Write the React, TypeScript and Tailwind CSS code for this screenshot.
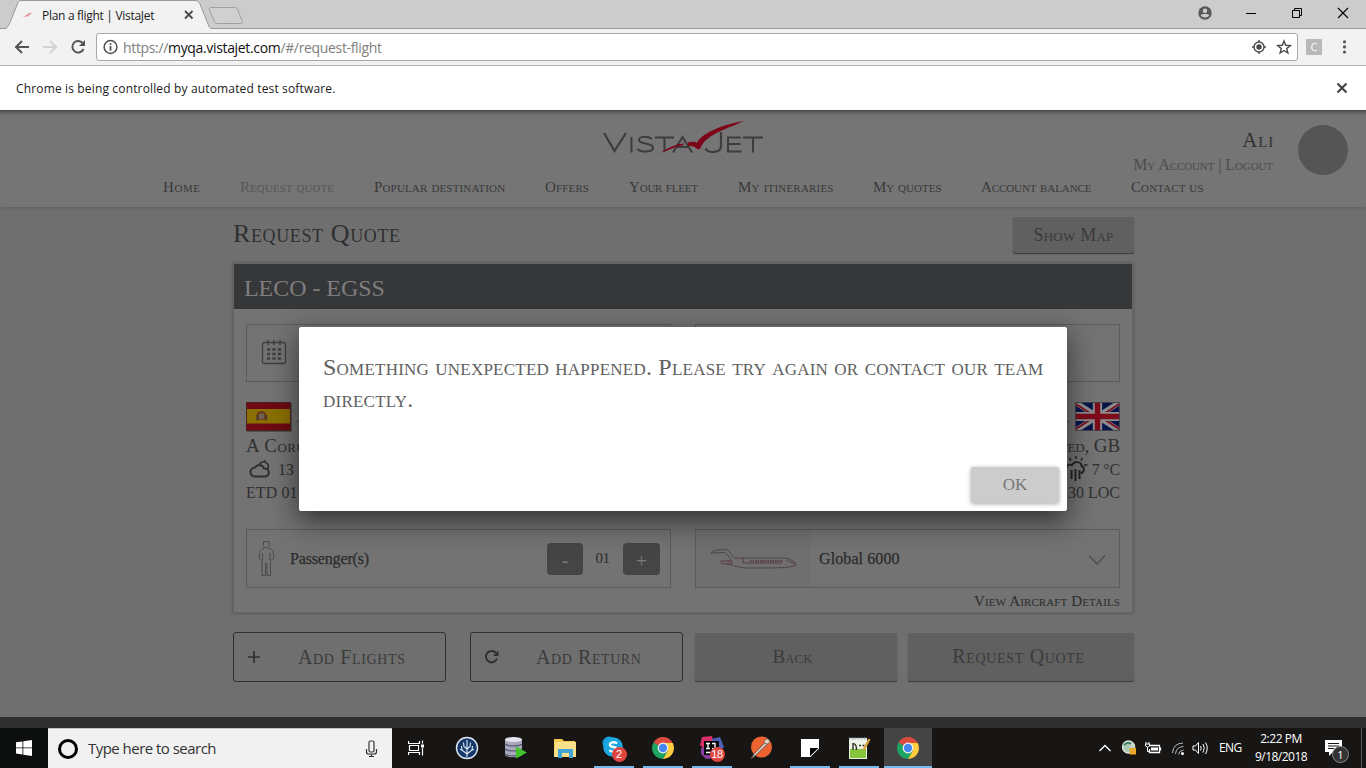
import type { ReactNode } from "react";

const serif = "font-['Liberation_Serif',serif] whitespace-nowrap";
const caps = "[font-variant-caps:small-caps]";
const sans = "font-['Open_Sans','Noto_Sans',sans-serif] whitespace-nowrap";

const navItems = [
  { label: "Home", style: "w-[37px] tracking-[0.57px] text-[#393939]" },
  { label: "Request quote", style: "w-[94px] tracking-[0.07px] text-[#565656]" },
  { label: "Popular destination", style: "w-[131px] tracking-[0.16px] text-[#393939]" },
  { label: "Offers", style: "w-[44px] tracking-[0.15px] text-[#393939]" },
  { label: "Your fleet", style: "w-[69px] tracking-[-0.2px] text-[#393939]" },
  { label: "My itineraries", style: "w-[95px] tracking-[0.2px] text-[#393939]" },
  { label: "My quotes", style: "w-[68px] tracking-[0.01px] text-[#393939]" },
  { label: "Account balance", style: "w-[110px] tracking-[-0.09px] text-[#393939]" },
  { label: "Contact us", style: "w-[72px] tracking-[0.11px] text-[#393939]" },
];

function TabStrip() {
  return (
    <div className="relative flex h-[29px] shrink-0 bg-[#cccccc]">
      <svg className="absolute inset-0 h-[29px] w-full" viewBox="0 0 1366 29">
        <path d="M0 28.5H1366" stroke="#999" />
        <path d="M6 29C9 26 9.500 24 11 20L17 5C18 2 18.500 .5 21 .5H195C198 .5 199 2 200 4L208 24C209 27 210 28 212 29Z" fill="#f2f2f2" />
        <path d="M0 28.500H5C7 28 9 25 11 20L17 5C18 2 18.500 .5 21 .5H195C198 .5 199 2 200 4L208 24C209 27 210 28.500 212 28.500" fill="none" stroke="#999" />
        <path d="M211 7.500H235C236 7.500 237 8 237.500 9.500L242 20.500C243 22.500 242.500 23.500 241 23.500H218C216 23.500 215 23 214.500 21.500L209.500 10C209 8.500 209.500 7.500 211 7.500Z" fill="#d0d0d0" stroke="#a0a0a0" />
        <path d="M22.500 17C26 15.500 27 15 28 13.500C29.500 13.500 31 12.500 33 12.500C30.500 14 29 15.500 27.500 16.500C26 16.500 25 16 22.500 17Z" fill="#e08a96" />
        <path d="M185 11L192.500 18.500M192.500 11L185 18.500" stroke="#4a4a4a" strokeWidth="1.800" />
      </svg>
      <span className={`${sans} relative ml-[42px] text-[12px] leading-[31px] tracking-[-0.3px] text-[#1c1c1c]`}>Plan a flight | VistaJet</span>
      <svg className="relative ml-auto h-[28px] w-[170px]" viewBox="1196 0 170 28" fill="none">
        <circle cx="1205" cy="13" r="6.700" fill="#585858" />
        <circle cx="1205" cy="10.700" r="2.200" fill="#ccc" />
        <path d="M1200.700 15.500C1202 13.600 1208 13.600 1209.300 15.500C1207.500 18 1202.500 18 1200.700 15.500Z" fill="#ccc" />
        <path d="M1246 13.500H1256" stroke="#000" />
        <path d="M1292.500 10.500H1299.500V17.500H1292.500ZM1294.500 10V8.500H1301.500V15.500H1300" stroke="#000" />
        <path d="M1338 8L1348 18M1348 8L1338 18" stroke="#000" strokeWidth="1.100" />
      </svg>
    </div>
  );
}

function Toolbar() {
  return (
    <div className="flex h-[37px] shrink-0 items-center border-b border-[#b0b0b0] bg-[#f2f2f2]">
      <svg className="h-[36px] w-[96px]" viewBox="0 29 96 36" fill="none" strokeWidth="2">
        <path d="M29 47H16.500M22 41L16 47L22 53" stroke="#555" />
        <path d="M43 47H55.500M50 41L56 47L50 53" stroke="#d2d2d2" />
        <path d="M83 43.500A5.800 5.800 0 1 0 83.500 49" stroke="#555" />
        <path d="M85 40V46H79Z" fill="#555" />
      </svg>
      <div className="flex h-[28px] w-[1202px] items-center rounded-[3px] border border-[#a8a8a8] bg-white">
        <svg className="ml-[6px] h-4 w-4" viewBox="0 0 16 16" fill="none" stroke="#4f4f4f">
          <circle cx="7.500" cy="8" r="6.400" strokeWidth="1.500" />
          <path d="M7.500 7V11.700M7.500 4.300V6" strokeWidth="1.800" />
        </svg>
        <span className={`${sans} ml-[4px] text-[14px] tracking-[-0.34px] text-[#808080]`}>
          https://<span className="text-[#111]">myqa.vistajet.com</span>/#/request-flight
        </span>
        <svg className="ml-auto mr-[5px] h-[26px] w-[42px]" viewBox="1250 34 42 26" fill="none">
          <circle cx="1259" cy="47" r="5" stroke="#4a4a4a" strokeWidth="1.400" />
          <circle cx="1259" cy="47" r="2.700" fill="#4a4a4a" />
          <path d="M1252 47H1254M1264 47H1266M1259 40V42M1259 52V54" stroke="#4a4a4a" strokeWidth="1.400" />
          <path d="M1284 41L1285.700 45.300L1290.300 45.600L1286.700 48.500L1287.900 53L1284 50.500L1280.100 53L1281.300 48.500L1277.700 45.600L1282.300 45.300Z" stroke="#4a4a4a" strokeWidth="1.400" />
        </svg>
      </div>
      <span className={`${sans} ml-[8px] flex h-4 w-4 items-center justify-center bg-[#b9b9b9] text-[11px] text-white`}>C</span>
      <svg className="ml-[20px] h-4 w-[6px]" viewBox="0 0 6 16" fill="#555">
        <circle cx="2.500" cy="2.800" r="1.600" />
        <circle cx="2.500" cy="7.900" r="1.600" />
        <circle cx="2.500" cy="13" r="1.600" />
      </svg>
    </div>
  );
}

function Logo() {
  return (
    <svg className="ml-[18px] mt-[10px] h-[36px] w-[162px]" viewBox="602 120 162 36" fill="none">
      <g stroke="#3c3c3c" strokeWidth="2">
        <path d="M604 133L614.500 151L626 133" strokeWidth="2.200" />
        <path d="M631.500 137V152.500" />
        <path d="M652 139C648 136 639 136 639 140C639 144.500 653 142.500 653 147.500C653 152.800 641 152.500 637.500 149" />
        <path d="M655 137.500H674M664.500 137.500V152" />
        <path d="M673 152.500L682.500 137L692 152.500M676.500 147H688" />
        <path d="M721 132V146C721 153.500 708 153.500 705.500 148.500" strokeWidth="2.200" />
        <path d="M741 137.500H728V151.500H741.500M728 144H740.500" />
        <path d="M743 137.500H763M753 137.500V152.500" />
      </g>
      <path d="M660 153C669 147 677 144 684 143.500L683 145.500C677 146 669 150 660 153ZM688 142.500C691 141.500 695 141 697 143C701 134 720 125 744 121C729 128 707 134 701 147C700 149.500 698 150 696 148C694 146 691 146 688 146Z" fill="#7c0519" />
    </svg>
  );
}

function Header() {
  return (
    <header className="h-[97px] shrink-0 bg-[#757575] shadow-[0_1px_3px_rgba(0,0,0,0.12),inset_0_7px_4px_-5px_rgba(0,0,0,0.45)]">
      <div className="flex h-[65px]">
        <div className="flex-1" />
        <Logo />
        <div className="flex flex-1 justify-end pr-[18px]">
          <div className={`${serif} ${caps} mr-[25px] flex flex-col items-end pt-[18px]`}>
            <span className="mr-[-1px] text-[21px] leading-[24px] tracking-[0.8px] text-[#303030]">Ali</span>
            <span className="text-[16px] leading-[25px] tracking-[-0.09px] text-[#4c4c4c]">My Account | Logout</span>
          </div>
          <div className="mt-[15px] h-[50px] w-[50px] rounded-full bg-[#555555]" />
        </div>
      </div>
      <nav className={`${serif} ${caps} ml-[163px] flex gap-10 pt-[2px] text-[15px] leading-[20px]`}>
        {navItems.map((n) => (
          <span key={n.label} className={n.style}>{n.label}</span>
        ))}
      </nav>
    </header>
  );
}

function SpainFlag() {
  return (
    <svg className="h-[30px] w-[46px]" viewBox="0 0 46 30">
      <path d="M0 0H45V29H0Z" fill="#6f0a14" />
      <path d="M0 7H45V21.500H0Z" fill="#8a7000" />
      <path d="M11 11Q15.500 7 20 11L20.500 18H11Z" fill="#6b3a17" />
      <path d="M13 11.500H18V16Q15.500 19 13 16Z" fill="#6b6252" />
      <path d="M11 18.500V13M20.500 18.500V13" stroke="#3f3d33" strokeWidth="1.300" />
      <path d="M.5 .5H44.500V28.500H.5Z" fill="none" stroke="#4a2320" />
      <path d="M1 29.500H45.500V1" fill="none" stroke="#505050" />
    </svg>
  );
}

function UkFlag() {
  return (
    <svg className="h-[29px] w-[45px]" viewBox="0 0 46 30" preserveAspectRatio="none">
      <path d="M0 0H46V30H0Z" fill="#07154a" />
      <path d="M0 0L46 30M46 0L0 30" stroke="#8b8b8b" strokeWidth="5.500" />
      <path d="M0 1.500L19 14M46 1.500L27 14M0 28.500L19 16M46 28.500L27 16" stroke="#7d0c1c" strokeWidth="1.800" />
      <path d="M23 0V30M0 15H46" stroke="#8b8b8b" strokeWidth="9.500" />
      <path d="M23 0V30M0 15H46" stroke="#7d0c1c" strokeWidth="5.500" />
      <path d="M.5 .5H45.500V29.500H.5Z" fill="none" stroke="#45454a" />
    </svg>
  );
}

function Field({ children }: { children?: ReactNode }) {
  return <div className="flex h-full w-[425px] items-center border border-[#5b5b5b]">{children}</div>;
}

function FlightCard() {
  return (
    <section className="mt-[9px] h-[350px] w-[900px] border border-[#656565] bg-[#737373] shadow-[0_0_3px_rgba(0,0,0,0.35)]">
      <div className={`${serif} h-[45px] bg-[#363739] pl-[10px] text-[24px] leading-[49px] tracking-[-0.05px] text-[#7e7e7e]`}>LECO - EGSS</div>
      <div className="px-[12px] pt-[15px]">
        <div className="flex h-[58px] justify-between">
          <Field>
            <svg className="ml-[14px] mt-[-3px] h-[26px] w-[26px]" viewBox="0 0 26 26" fill="none" stroke="#3f3f3f">
              <rect x="1.500" y="3.500" width="23" height="21" rx="1.500" strokeWidth="1.300" />
              <path d="M7 1V6M13 1V6M19 1V6" strokeWidth="1.500" />
              <path d="M6 10.500H20M6 15H20M6 19.500H20" strokeWidth="2.400" strokeDasharray="3.200 2.200" />
            </svg>
          </Field>
          <Field />
        </div>
        <div className={`${serif} mt-[19px] flex justify-between text-[#303030]`}>
          <div>
            <div className={`${caps} flex h-[31px] items-center gap-[5px] text-[19px]`}>
              <SpainFlag />
              <span>A</span>
            </div>
            <div className={`${caps} h-[26px] text-[19px] leading-[27px] tracking-[0.46px]`}>A Coruña</div>
            <div className="flex h-[22px] items-center text-[16px] leading-[22px]">
              <svg className="ml-[3px] mr-[7px] h-[20px] w-[22px]" viewBox="0 0 22 20" fill="none" stroke="#2f2f2f" strokeWidth="2">
                <path d="M6 17.500C-.5 17 .5 8.500 6 8.500C9 4.500 14 6 15 9.500C21 9 21.500 17.500 16 17.500Z" />
                <path d="M10.500 5C12 2.500 14 3.500 15.500 2C16 4 20 4.500 19.500 7C18.500 8 20 9 18.500 10.500" strokeWidth="1.600" />
              </svg>
              <span className="pt-[2px]">13 °C</span>
            </div>
            <div className="h-[24px] text-[16px] leading-[25px] tracking-[0.1px]">ETD 01</div>
          </div>
          <div className="flex flex-col items-end">
            <div className={`${caps} flex h-[31px] items-center gap-[5px] text-[19px]`}>
              <span>1</span>
              <UkFlag />
            </div>
            <div className={`${caps} h-[26px] text-[19px] leading-[27px] tracking-[-0.1px]`}>Stansted, GB</div>
            <div className="flex h-[22px] items-center text-[16px] leading-[22px]">
              <svg className="mb-[2px] mr-[4px] h-[26px] w-[24px]" viewBox="0 0 24 26" fill="none" stroke="#242424" strokeWidth="1.900">
                <path d="M2 15C2 10 5 9 8 10C10 6 17 6 17.500 11C21 12 20.500 18 16.500 18" />
                <path d="M7.500 15V24M11.500 14V26M15.500 15V24" />
                <path d="M12 1V4M5.500 3L7 5.500M18.500 3L17 5.500M20 10H23.500" strokeWidth="1.500" />
              </svg>
              <span className="pt-[2px] tracking-[-0.2px]">7 °C</span>
            </div>
            <div className="h-[24px] text-[16px] leading-[25px]">30 LOC</div>
          </div>
        </div>
        <div className={`${serif} mt-[25px] flex h-[59px] justify-between text-[16px] text-[#2c2c2c]`}>
          <Field>
            <svg className="ml-[11px] h-[37px] w-[17px]" viewBox="0 0 17 37" fill="none" stroke="#4b4b4b">
              <path d="M5.500 1.500H11V5.500C11 8.500 5.500 8.500 5.500 5.500ZM6 8.500C3 9 2 10 1.500 14L1 18L4 21V35.500H7.500V23M10.500 8.500C14 9 15 10 15.500 14L16 18L12.500 21V35.500H9V23M4.500 13V20M12 13V20" />
            </svg>
            <span className="ml-[15px] w-[257px] [-webkit-text-stroke:0.25px] tracking-[-0.16px]">Passenger(s)</span>
            <span className="mt-[1px] flex h-[32px] w-[36px] items-center justify-center rounded-[4px] bg-[#454545] pt-px text-[20px] text-[#7b7b7b]">-</span>
            <span className="w-[39px] pb-[1px] text-center text-[15px] tracking-[-0.6px]">01</span>
            <span className="ml-px mt-[1px] flex h-[32px] w-[37px] items-center justify-center rounded-[4px] bg-[#454545] pt-[3px] text-[20px] text-[#7b7b7b]">+</span>
          </Field>
          <Field>
            <div className="flex h-full w-[115px] items-center bg-[#6f6f6f]">
              <svg className="ml-[14px] h-[24px] w-[90px]" viewBox="710 547 90 24" fill="none" stroke="#5b3e43" strokeWidth="1">
                <path d="M711 553C716 549 721 549.500 728 550C731 553 733 557 735 558H785C790 559 796 562 796.500 565C790 568 780 567.500 770 568H745C737 567 732 565 727 564L731 560C728 556 727 553 725 552.500L711 553Z" stroke="#514548" />
                <path d="M721 561H732V564H722ZM743 557V563H782M786 560L795 564" />
                <path d="M750 561H783" strokeDasharray="1.500 1" strokeWidth="2" />
              </svg>
            </div>
            <span className="ml-[8px] [-webkit-text-stroke:0.25px] tracking-[0.1px]">Global 6000</span>
            <svg className="ml-auto mr-[13px] mt-[3px] h-[12px] w-[18px]" viewBox="0 0 18 12" fill="none" stroke="#4d4d4d" strokeWidth="1.200">
              <path d="M1 1.500L9 10L17 1.500" />
            </svg>
          </Field>
        </div>
        <div className={`${serif} ${caps} text-right text-[15px] leading-[26px] tracking-[0.12px] text-[#2c2c2c]`}>View Aircraft Details</div>
      </div>
    </section>
  );
}

function PageBody() {
  return (
    <main className={`${serif} ml-[233px] flex w-[901px] flex-1 flex-col`}>
      <div className="mt-[10px] flex h-[37px] justify-between">
        <h1 className={`${caps} text-[26px] leading-[34px] tracking-[0.62px] text-[#2f2f2f]`}>Request Quote</h1>
        <div className={`${caps} flex h-[36px] w-[121px] items-center justify-center rounded-[2px] bg-[#606060] text-[18px] tracking-[0.25px] text-[#3a3a3a] shadow-[0_1px_1px_rgba(0,0,0,0.5)]`}>Show Map</div>
      </div>
      <FlightCard />
      <div className={`${caps} mt-[19px] flex h-[50px] text-[20px] text-[#3b3b3b]`}>
        <div className="flex w-[213px] items-center rounded-[3px] border border-[#303030]">
          <svg className="ml-[13px] h-[14px] w-[14px]" viewBox="0 0 14 14" stroke="#303030" strokeWidth="1.700"><path d="M7 1V13M1 7H13" /></svg>
          <span className="ml-[37px] tracking-[0.65px]">Add Flights</span>
        </div>
        <div className="ml-[24px] flex w-[213px] items-center rounded-[3px] border border-[#303030]">
          <svg className="ml-[12px] h-[16px] w-[18px]" viewBox="0 0 18 16" fill="none" stroke="#303030" strokeWidth="2">
            <path d="M13 4A5.700 5.700 0 1 0 14 9.500" />
            <path d="M15.500 1.500V7H10Z" fill="#303030" stroke="none" />
          </svg>
          <span className="ml-[35px] tracking-[0.58px]">Add Return</span>
        </div>
        <div className="ml-[12px] mt-px flex h-[48px] w-[202px] items-center justify-center rounded-[2px] bg-[#606060] pr-[7px] text-[19px] shadow-[0_1px_1px_rgba(0,0,0,0.5)]">Back</div>
        <div className="ml-[11px] mt-px flex h-[48px] w-[226px] items-center justify-center rounded-[2px] bg-[#606060] pb-[2px] pr-[5px] tracking-[0.68px] shadow-[0_1px_1px_rgba(0,0,0,0.5)]">Request Quote</div>
      </div>
    </main>
  );
}

function ErrorDialog() {
  return (
    <div
      role="dialog"
      className={`${serif} absolute left-[299px] top-[217px] flex h-[184px] w-[768px] flex-col rounded-[2px] bg-white shadow-[0_11px_15px_-7px_rgba(0,0,0,0.2),0_12px_30px_2px_rgba(0,0,0,0.25),0_6px_24px_4px_rgba(0,0,0,0.2)]`}
    >
      <p className={`${caps} flex-1 pl-[24px] pt-[24px] text-[24px] leading-[32px] tracking-[0.23px] text-[#606060]`}>
        Something unexpected happened. Please try again or contact our team
        <br />
        directly.
      </p>
      <div className="mb-[8px] mr-[8px] flex h-[36px] w-[88px] items-center justify-center self-end rounded-[2px] bg-[#cccccc] text-[17px] text-[#767676] shadow-[0_1px_4px_rgba(0,0,0,0.35)]">OK</div>
    </div>
  );
}

function ChromeLogo() {
  return (
    <svg className="h-[24px] w-[24px]" viewBox="0 0 24 24">
      <path d="M12 12L2.500 6.500A11 11 0 0 1 21.500 6.500Z" fill="#dd4b3e" />
      <path d="M12 12L2.500 6.500A11 11 0 0 0 12 23L17 15Z" fill="#1da462" />
      <path d="M12 7H21.800A11 11 0 0 1 12 23L17 14.500Z" fill="#ffcd40" />
      <circle cx="12" cy="12" r="5.400" fill="#f2f2f2" />
      <circle cx="12" cy="12" r="4.200" fill="#4688f1" />
    </svg>
  );
}

function TreeIcon() {
  return (
    <svg className="h-[24px] w-[24px]" viewBox="0 0 24 24" fill="none">
      <circle cx="12" cy="12" r="10.500" fill="#17386b" stroke="#dfe8f0" strokeWidth="1.400" />
      <path d="M12 4V21M12 18L7 14L5 13.500M7 14L6.500 10M12 18L17 14L19 13.500M17 14L17.500 10M12 13L9 10.500L8.500 6.500M12 13L15 10.500L15.500 6.500" stroke="#dceaf2" strokeWidth="1.100" />
    </svg>
  );
}

function DatabaseIcon() {
  return (
    <svg className="h-[24px] w-[24px]" viewBox="0 0 24 24">
      <path d="M1 3V19C3 22 16 22 18 19V3Z" fill="#a9a9bd" />
      <ellipse cx="9.500" cy="3.500" rx="8.500" ry="2.500" fill="#e4e4ee" />
      <path d="M1 8C4 10.500 15 10.500 18 8M1 13C4 15.500 15 15.500 18 13M1 18C4 20.500 15 20.500 18 18" fill="none" stroke="#5c5c75" strokeWidth="1.400" />
      <path d="M12 10.500L23 16.500L12 22.500Z" fill="#3fc429" />
    </svg>
  );
}

function FolderIcon() {
  return (
    <svg className="h-[24px] w-[24px]" viewBox="0 0 24 24">
      <path d="M1 3H9L11 5H22V21H1Z" fill="#f5c94f" />
      <path d="M2 6H23V21H1Z" fill="#fbe08a" />
      <path d="M5 13H20V22H16V17H9V22H5Z" fill="#40a3d8" />
    </svg>
  );
}

function Badge({ n }: { n: string }) {
  return <span className="absolute left-[10px] top-[11px] flex h-[15px] w-[15px] items-center justify-center rounded-full bg-[#e0443f] font-['Liberation_Sans',sans-serif] text-[11px] leading-none tracking-[-0.3px] text-white">{n}</span>;
}

function SkypeIcon() {
  return (
    <span className="relative">
      <svg className="h-[24px] w-[24px]" viewBox="0 0 24 24">
        <circle cx="7" cy="7" r="6.500" fill="#159fda" /><circle cx="15" cy="15" r="7" fill="#159fda" />
        <circle cx="11" cy="11" r="9.800" fill="#1aa7e2" />
        <path d="M15 7.500C13 5.500 7.500 6 8 9C8.500 12 15 10 14.800 13.500C14.500 16.500 9 16.500 7.500 14" fill="none" stroke="#fff" strokeWidth="2.400" />
      </svg>
      <Badge n="2" />
    </span>
  );
}

function IdeaIcon() {
  return (
    <span className="relative">
      <svg className="h-[24px] w-[24px]" viewBox="0 0 24 24">
        <path d="M2 1L12 0L14 8L4 13L0 9Z" fill="#d82f6b" />
        <path d="M12 3L20 1L24 11L18 18L10 12Z" fill="#4b62b8" />
        <path d="M1 12L10 10L14 22L6 23L1 18Z" fill="#8a3fa0" />
        <rect x="4" y="5" width="15" height="14" fill="#0b0b0b" />
        <path d="M6 7.500H10M8 7.500V12.500M6 12.500H10M12 7.500H15V11.500Q15 13 12 12.500M6 16.500H11" stroke="#fff" fill="none" strokeWidth="1.300" />
      </svg>
      <Badge n="18" />
    </span>
  );
}

function PostmanIcon() {
  return (
    <svg className="h-[24px] w-[24px]" viewBox="0 0 24 24" fill="none">
      <circle cx="12.500" cy="11" r="10.500" fill="#ee6430" />
      <path d="M2 23L5 18L16 6.500L18.500 8L7 19Z" fill="#d6c9bf" stroke="#5b5048" strokeWidth=".8" />
      <circle cx="18" cy="5.500" r="2.500" fill="#e8dad0" stroke="#6b5b50" strokeWidth=".8" />
    </svg>
  );
}

function NoteIcon() {
  return (
    <svg className="h-[24px] w-[24px]" viewBox="0 0 24 24">
      <path d="M3 3H21V21H3Z" fill="#fff" />
      <path d="M12 12H21V21H12Z" fill="#171615" />
      <path d="M12.500 20.500V12.500H20.500Z" fill="#050505" />
      <path d="M12 21V20.300L20.300 12H21V12.500L12.500 21Z" fill="#fff" />
    </svg>
  );
}

function NotepadIcon() {
  return (
    <svg className="h-[24px] w-[24px]" viewBox="0 0 24 24" fill="none">
      <path d="M2 2H20V23H2Z" fill="#eef2ea" />
      <path d="M3 13H19V22H3Z" fill="#86c63b" />
      <path d="M2 2.500H20" stroke="#9bb1bc" strokeWidth="2" strokeDasharray="1.500 1.500" />
      <path d="M6 7V14M6 8Q9.500 7 9.500 14M12 9.500H14M15.500 9.500H17.500" stroke="#2b3520" strokeWidth="1.400" />
      <path d="M22.500 3L16.500 14" stroke="#dba23b" strokeWidth="2.400" />
    </svg>
  );
}

const apps: { icon: ReactNode; bar: string }[] = [
  { icon: <TreeIcon />, bar: "" },
  { icon: <DatabaseIcon />, bar: "" },
  { icon: <FolderIcon />, bar: "" },
  { icon: <SkypeIcon />, bar: "bg-[#76b9ed]" },
  { icon: <ChromeLogo />, bar: "bg-[#76b9ed]" },
  { icon: <IdeaIcon />, bar: "bg-[#76b9ed]" },
  { icon: <PostmanIcon />, bar: "" },
  { icon: <NoteIcon />, bar: "bg-[#76b9ed]" },
  { icon: <NotepadIcon />, bar: "bg-[#76b9ed]" },
];

function Taskbar() {
  return (
    <footer className={`${sans} flex h-[40px] shrink-0 bg-[#171615] text-white`}>
      <div className="flex w-[48px] items-center justify-center bg-[#0d0f0f]">
        <svg className="h-[16px] w-[16px]" viewBox="0 0 16 16" fill="#fff"><path d="M0 2.300L6.500 1.400V7.500H0ZM7.300 1.300L16 0V7.500H7.300ZM0 8.300H6.500V14.500L0 13.600ZM7.300 8.300H16V16L7.300 14.700Z" /></svg>
      </div>
      <div className="flex w-[344px] items-center border-t border-[#c4c4c4] bg-[#f1f1f1]">
        <div className="ml-[10px] h-[20px] w-[20px] rounded-full border-[3px] border-black" />
        <span className="ml-[10px] text-[15px] tracking-[-0.53px] text-[#333]">Type here to search</span>
        <svg className="ml-auto mr-[14px] h-[18px] w-[13px]" viewBox="0 0 13 18" fill="none" stroke="#333" strokeWidth="1.200">
          <rect x="4" y="1" width="5" height="11" rx="1.500" />
          <path d="M1.500 9V12Q1.500 14 4 14H9Q11.500 14 11.500 12V9M6.500 14V16.500M4 16.500H9" />
        </svg>
      </div>
      <div className="flex w-[50px] items-center justify-center">
        <svg className="ml-[-2px] h-[16px] w-[17px]" viewBox="0 0 17 16" fill="none" stroke="#fff" strokeWidth="1.200">
          <path d="M.5 1V3.500H11.500V1M1.500 5.500H10.500V10.500H1.500ZM.5 15V12.500H11.500V15M14.500 .5V3.500M14.500 8V15.500" />
          <path d="M13 4.500H16V7.500H13Z" fill="#fff" stroke="none" />
        </svg>
      </div>
      {apps.map((a, i) => (
        <div key={i} className="flex w-[49px] flex-col items-center">
          <div className="flex h-[38px] items-center pt-[2px]">{a.icon}</div>
          <div className={`h-[2px] w-[40px] ${a.bar}`} />
        </div>
      ))}
      <div className="ml-[1px] flex w-[48px] flex-col items-center bg-[#444444]">
        <div className="flex h-[38px] items-center pt-[2px]"><ChromeLogo /></div>
        <div className="h-[2px] w-full bg-[#76b9ed]" />
      </div>
      <svg className="ml-auto h-[40px] w-[120px]" viewBox="1096 728 120 40" fill="none" stroke="#fff" strokeWidth="1.300">
        <path d="M1099.500 751L1105 745.500L1110.500 751" />
        <circle cx="1128.500" cy="747" r="6" fill="#a9c9b3" stroke="#dfe6e4" />
        <path d="M1124 745Q1128 741 1131 744" stroke="#3b7f55" strokeWidth="2" />
        <path d="M1129.500 748H1136V754.500H1129.500Z" fill="#e9a72a" stroke="none" />
        <path d="M1131 748V745.500Q1132.700 743 1134.500 745.500V748" stroke="#ddd" />
        <path d="M1149.500 745.500H1159.500V752.500H1149.500V749M1160.500 747.500V750.500" />
        <path d="M1151 747.500H1158V750.500H1151Z" fill="#fff" stroke="none" />
        <path d="M1145.500 744H1149.500V746Q1147.500 748.500 1145.500 746ZM1146 742V744M1149 742V744M1147.500 747V751.500H1149" strokeWidth="1" />
        <path d="M1172.500 753Q1173 743.500 1183 743M1175.500 754Q1176 747 1183.500 746.500M1178.500 754.500Q1179 750.500 1183.500 750" strokeWidth="1" stroke="#bbb" />
        <circle cx="1182.500" cy="753.500" r="1.500" fill="#fff" stroke="none" />
        <path d="M1193 746H1195.500L1198.500 742.500V753.500L1195.500 750H1193ZM1200.500 746Q1202 748 1200.500 750.500M1203 744Q1205.500 748 1203 752.500M1205.500 742.500Q1209 748 1205.500 754" strokeWidth="1" />
      </svg>
      <span className="ml-[3px] w-[33px] text-[12px] leading-[39px] tracking-[-0.6px]">ENG</span>
      <div className="flex w-[58px] flex-col items-center pt-[2px] text-[12px] leading-[18px]">
        <span className="tracking-[-0.45px]">2:22 PM</span>
        <span className="tracking-[-0.52px]">9/18/2018</span>
      </div>
      <div className="relative ml-[15px] w-[36px]">
        <svg className="absolute left-0 top-[12px] h-[16px] w-[17px]" viewBox="0 0 17 16"><path d="M0 0H17V12H8L4 16V12H0Z" fill="#fff" /><path d="M3 3.500H14M3 6H14M3 8.500H9" stroke="#171615" /></svg>
        <span className="absolute left-[7px] top-[18px] flex h-[17px] w-[17px] items-center justify-center rounded-full border border-[#8a8a8a] bg-[#333] text-[11px] leading-none">1</span>
      </div>
      <div className="w-[5px] border-l border-[#5a5a5a]" />
    </footer>
  );
}

export default function App() {
  return (
    <div className="flex h-[768px] w-[1366px] flex-col overflow-hidden bg-[#6f6f6f]">
      <TabStrip />
      <Toolbar />
      <div className="flex h-[44px] shrink-0 items-center justify-between bg-white pl-4 pr-[18px]">
        <span className={`${sans} pt-[2px] text-[12px] tracking-[0.15px] text-[#1a1a1a]`}>Chrome is being controlled by automated test software.</span>
        <svg className="h-[12px] w-[12px]" viewBox="0 0 12 12" stroke="#444" strokeWidth="2.200"><path d="M1.500 1.500L10.500 10.500M10.500 1.500L1.500 10.500" /></svg>
      </div>
      <div className="relative flex flex-1 flex-col">
        <Header />
        <PageBody />
        <div className="h-[11px] bg-[#2f2f2f]" />
        <ErrorDialog />
      </div>
      <Taskbar />
    </div>
  );
}
